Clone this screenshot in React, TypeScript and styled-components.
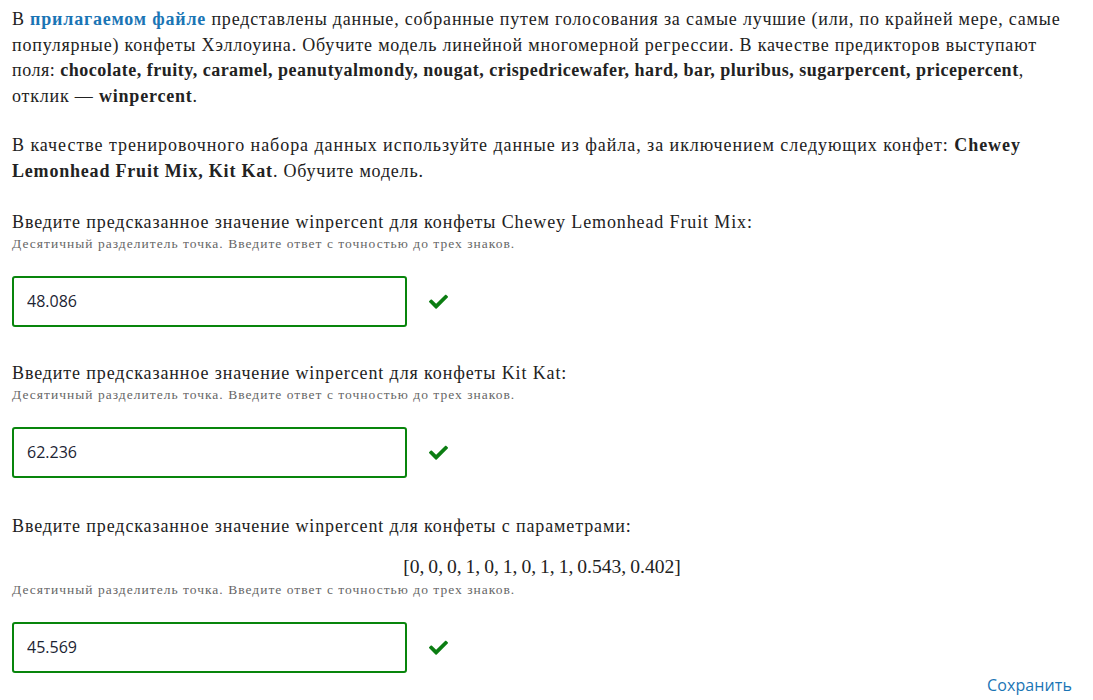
import React from "react";
import styled, { createGlobalStyle } from "styled-components";

const Global = createGlobalStyle`
  html, body { margin: 0; padding: 0; background: #ffffff; }
  body { font-family: "Liberation Serif", "DejaVu Serif", serif; color: #222222; }
`;

const Page = styled.div`
  padding: 7px 21px 0 12px;
  display: flex;
  flex-direction: column;
`;

const Para = styled.p`
  margin: 0 0 24px 0;
  font-size: 18px;
  line-height: 25.6px;
  letter-spacing: 0.8px;
`;

const Line = styled.span<{ $spacing?: number }>`
  display: block;
  white-space: nowrap;
  ${(p) => (p.$spacing !== undefined ? `letter-spacing: ${p.$spacing}px;` : "")}
`;

const Link = styled.a`
  color: #1a75b5;
  font-weight: bold;
  text-decoration: none;
`;

const Question = styled.div<{ $top: number }>`
  display: flex;
  flex-direction: column;
  margin-top: ${(p) => p.$top}px;
`;

const Label = styled.div`
  font-size: 18px;
  line-height: 26px;
  letter-spacing: 0.88px;
`;

const Hint = styled.div`
  font-size: 13.5px;
  line-height: 18px;
  color: #666666;
  letter-spacing: 1.02px;
`;

const Formula = styled.div`
  text-align: center;
  font-family: "Liberation Serif", "DejaVu Serif", serif;
  font-size: 19.6px;
  line-height: 28px;
  margin-top: 14px;
`;

const AnswerRow = styled.div`
  display: flex;
  align-items: center;
  gap: 22px;
  margin-top: 23px;
`;

const Input = styled.input`
  box-sizing: border-box;
  width: 395px;
  height: 51px;
  border: 2px solid #08850c;
  border-radius: 3px;
  padding: 0 13px;
  font-family: "Open Sans", "Noto Sans", sans-serif;
  font-size: 16px;
  color: #1c2433;
  background: #ffffff;
  outline: none;
`;

const Check = styled.svg`
  width: 19px;
  height: 15px;
  fill: #0b7d12;
`;

const Footer = styled.div`
  display: flex;
  justify-content: flex-end;
  margin-top: 1px;
`;

const SaveButton = styled.button`
  border: none;
  background: none;
  padding: 0;
  font-family: "Open Sans", "Noto Sans", sans-serif;
  font-size: 16px;
  line-height: 22px;
  color: #1a75b5;
  cursor: pointer;
  letter-spacing: 0.1px;
`;

const CheckIcon = () => (
  <Check viewBox="0 0 512 400">
    <path d="M173.9 389.8L7.5 223.4c-10-10-10-26.2 0-36.2l36.2-36.2c10-10 26.2-10 36.2 0L192 263.1 432.1 23c10-10 26.2-10 36.2 0l36.2 36.2c10 10 10 26.2 0 36.2L210.1 389.8c-10 10-26.2 10-36.2 0z" />
  </Check>
);

const Answer = ({ value }: { value: string }) => (
  <AnswerRow>
    <Input defaultValue={value} />
    <CheckIcon />
  </AnswerRow>
);

const HINT = "Десятичный разделитель точка. Введите ответ с точностью до трех знаков.";
const T = "\u2009";
const FORMULA = ["0", "0", "0", "1", "0", "1", "0", "1", "1", "0.543", "0.402"].join("," + T);

export default function App() {
  return (
    <>
      <Global />
      <Page>
        <Para>
          <Line>
            В <Link href="#">прилагаемом файле</Link> представлены данные, собранные путем голосования за самые лучшие (или, по крайней мере, самые
          </Line>
          <Line>
            популярные) конфеты Хэллоуина. Обучите модель линейной многомерной регрессии. В качестве предикторов выступают
          </Line>
          <Line $spacing={0.5}>
            поля: <b>chocolate, fruity, caramel, peanutyalmondy, nougat, crispedricewafer, hard, bar, pluribus, sugarpercent, pricepercent</b>,
          </Line>
          <Line>
            отклик — <b>winpercent</b>.
          </Line>
        </Para>
        <Para>
          <Line $spacing={0.95}>
            В качестве тренировочного набора данных используйте данные из файла, за иключением следующих конфет: <b>Chewey</b>
          </Line>
          <Line>
            <b>Lemonhead Fruit Mix, Kit Kat</b>. Обучите модель.
          </Line>
        </Para>
        <Question $top={0}>
          <Label>Введите предсказанное значение winpercent для конфеты Chewey Lemonhead Fruit Mix:</Label>
          <Hint>{HINT}</Hint>
          <Answer value="48.086" />
        </Question>
        <Question $top={33}>
          <Label>Введите предсказанное значение winpercent для конфеты Kit Kat:</Label>
          <Hint>{HINT}</Hint>
          <Answer value="62.236" />
        </Question>
        <Question $top={35}>
          <Label>Введите предсказанное значение winpercent для конфеты с параметрами:</Label>
          <Formula>[{FORMULA}]</Formula>
          <Hint>{HINT}</Hint>
          <Answer value="45.569" />
        </Question>
        <Footer>
          <SaveButton>Сохранить</SaveButton>
        </Footer>
      </Page>
    </>
  );
}
